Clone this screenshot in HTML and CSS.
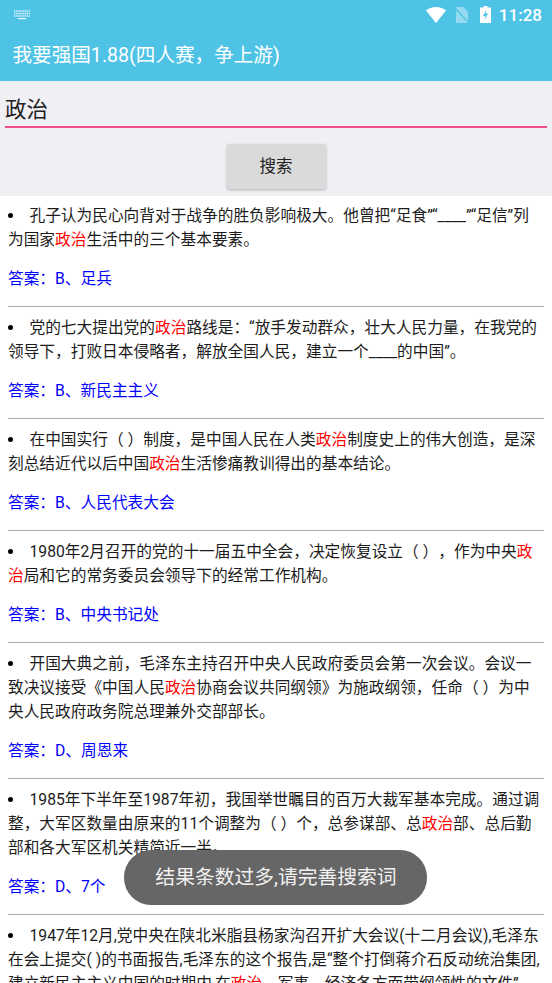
FILE: index.html
```html
<!DOCTYPE html>
<html lang="zh-CN">
<head>
    <meta charset="UTF-8">
    <meta name="viewport" content="width=device-width, initial-scale=1.0">
    <title>我要强国</title>
    <link rel="stylesheet" href="styles.css">
</head>
<body>
    <div class="app">
        <div class="status-bar">
            <svg class="keyboard-icon" width="18" height="10" viewBox="0 0 18 10">
                <path d="M1 1h16M1 3.500h16M1 6h16" stroke="#fff" stroke-width="1.300" stroke-dasharray="1.400 .7" fill="none" opacity=".8"/>
                <path d="M5 8.600h8" stroke="#fff" stroke-width="1.200" opacity=".9"/>
            </svg>
            <div class="status-right">
                <svg width="20" height="16" viewBox="0 0 20 16"><path d="M0 3.500C2.700 1.200 6.200 0 10 0s7.300 1.200 10 3.500L10 16z" fill="#fff"/></svg>
                <svg class="sim-icon" width="15" height="16" viewBox="0 0 15 16"><path d="M2 0h7l5 5v11H2z" fill="#fff" opacity=".4"/><path d="M.5 .5l14 15" stroke="#4fc3e6" stroke-width="1.400"/></svg>
                <svg class="battery-icon" width="11" height="17" viewBox="0 0 11 17"><path d="M3.500 0h4v1.500H11V17H0V1.500h3.500z" fill="#fff"/><path d="M6.500 3.500L3 10h2.200L4.500 14 8 7.500H5.800z" fill="#4fc3e6"/></svg>
                <span class="clock">11:28</span>
            </div>
        </div>
        <div class="app-bar">我要强国1.88(四人赛，争上游)</div>
        <div class="search-area">
            <div class="search-input">政治</div>
            <button class="search-button">搜索</button>
        </div>
        <div class="results">
            <p class="question"><span class="bullet"></span>孔子认为民心向背对于战争的胜负影响极大。他曾把“足食”“____”“足信”列为国家<em>政治</em>生活中的三个基本要素。</p>
            <p class="answer">答案：B、足兵</p>
            <hr>
            <p class="question"><span class="bullet"></span>党的七大提出党的<em>政治</em>路线是：“放手发动群众，壮大人民力量，在我党的领导下，打败日本侵略者，解放全国人民，建立一个____的中国”。</p>
            <p class="answer">答案：B、新民主主义</p>
            <hr>
            <p class="question"><span class="bullet"></span>在中国实行（ ）制度，是中国人民在人类<em>政治</em>制度史上的伟大创造，是深刻总结近代以后中国<em>政治</em>生活惨痛教训得出的基本结论。</p>
            <p class="answer">答案：B、人民代表大会</p>
            <hr>
            <p class="question"><span class="bullet"></span>1980年2月召开的党的十一届五中全会，决定恢复设立（ ），作为中央<em>政治</em>局和它的常务委员会领导下的经常工作机构。</p>
            <p class="answer">答案：B、中央书记处</p>
            <hr>
            <p class="question"><span class="bullet"></span>开国大典之前，毛泽东主持召开中央人民政府委员会第一次会议。会议一致决议接受《中国人民<em>政治</em>协商会议共同纲领》为施政纲领，任命（ ）为中央人民政府政务院总理兼外交部部长。</p>
            <p class="answer">答案：D、周恩来</p>
            <hr>
            <p class="question"><span class="bullet"></span>1985年下半年至1987年初，我国举世瞩目的百万大裁军基本完成。通过调整，大军区数量由原来的11个调整为（ ）个，总参谋部、总<em>政治</em>部、总后勤部和各大军区机关精简近一半。</p>
            <p class="answer">答案：D、7个</p>
            <hr>
            <p class="question"><span class="bullet"></span>1947年12月,党中央在陕北米脂县杨家沟召开扩大会议(十二月会议),毛泽东在会上提交( )的书面报告,毛泽东的这个报告,是“整个打倒蒋介石反动统治集团,建立新民主主义中国的时期内,在<em>政治</em>、军事、经济各方面带纲领性的文件”。</p>
        </div>
        <div class="toast">结果条数过多,请完善搜索词</div>
    </div>
</body>
</html>
```
FILE: styles.css
```css
html, body {
    margin: 0;
    padding: 0;
}
body {
    font-family: Roboto, "Noto Sans CJK SC", sans-serif;
    background: #fff;
    text-spacing-trim: space-all;
}
.app {
    position: relative;
    width: 552px;
    height: 983px;
    overflow: hidden;
}
.status-bar {
    display: flex;
    align-items: center;
    justify-content: space-between;
    height: 29px;
    padding: 0 10px 0 13px;
    background: #4fc3e6;
}
.status-right {
    display: flex;
    align-items: center;
}
.sim-icon {
    margin-left: 8px;
}
.battery-icon {
    margin-left: 11px;
}
.clock {
    margin-left: 8px;
    font-size: 17px;
    font-weight: 500;
    color: #fff;
}
.app-bar {
    height: 52px;
    padding: 1px 0 0 12.500px;
    line-height: 52px;
    font-size: 19.600px;
    color: #fff;
    background: #4fc3e6;
    box-sizing: border-box;
}
.search-area {
    display: flex;
    flex-direction: column;
    align-items: center;
    height: 115px;
    padding: 0 5px;
    background: #f0eff4;
}
.search-input {
    align-self: stretch;
    height: 47px;
    padding: 12px 0 0 0;
    box-sizing: border-box;
    border-bottom: 2px solid #ee4f86;
    font-size: 21.500px;
    line-height: 33px;
    color: #222;
}
.search-button {
    width: 99px;
    height: 45px;
    margin-top: 16px;
    padding: 0 0 3px;
    border: none;
    border-radius: 2px;
    background: #dadada;
    box-shadow: 0 1px 3px rgba(0,0,0,0.25);
    font-family: inherit;
    font-size: 16.500px;
    color: #222;
}
.results {
    padding: 8px 8px 0;
    font-size: 15.700px;
    line-height: 24px;
    color: #1c1c1c;
}
.question {
    margin: 0 0 15px;
}
.bullet {
    display: inline-block;
    width: 5px;
    height: 5px;
    margin: 0 16.500px 3px 0;
    border-radius: 50%;
    background: #000;
    vertical-align: middle;
}
.question em {
    font-style: normal;
    color: #f00;
}
.answer {
    margin: 0 0 15px;
    color: #00f;
}
.results hr {
    height: 1px;
    margin: 0 0 9px;
    border: none;
    background: #aaa;
}
.toast {
    position: absolute;
    left: 124px;
    top: 850px;
    width: 303px;
    height: 55px;
    border-radius: 27px;
    background: #666;
    color: #f2f2f2;
    font-size: 19.800px;
    line-height: 55px;
    text-align: center;
    padding-left: 1px;
    box-sizing: border-box;
}
```
